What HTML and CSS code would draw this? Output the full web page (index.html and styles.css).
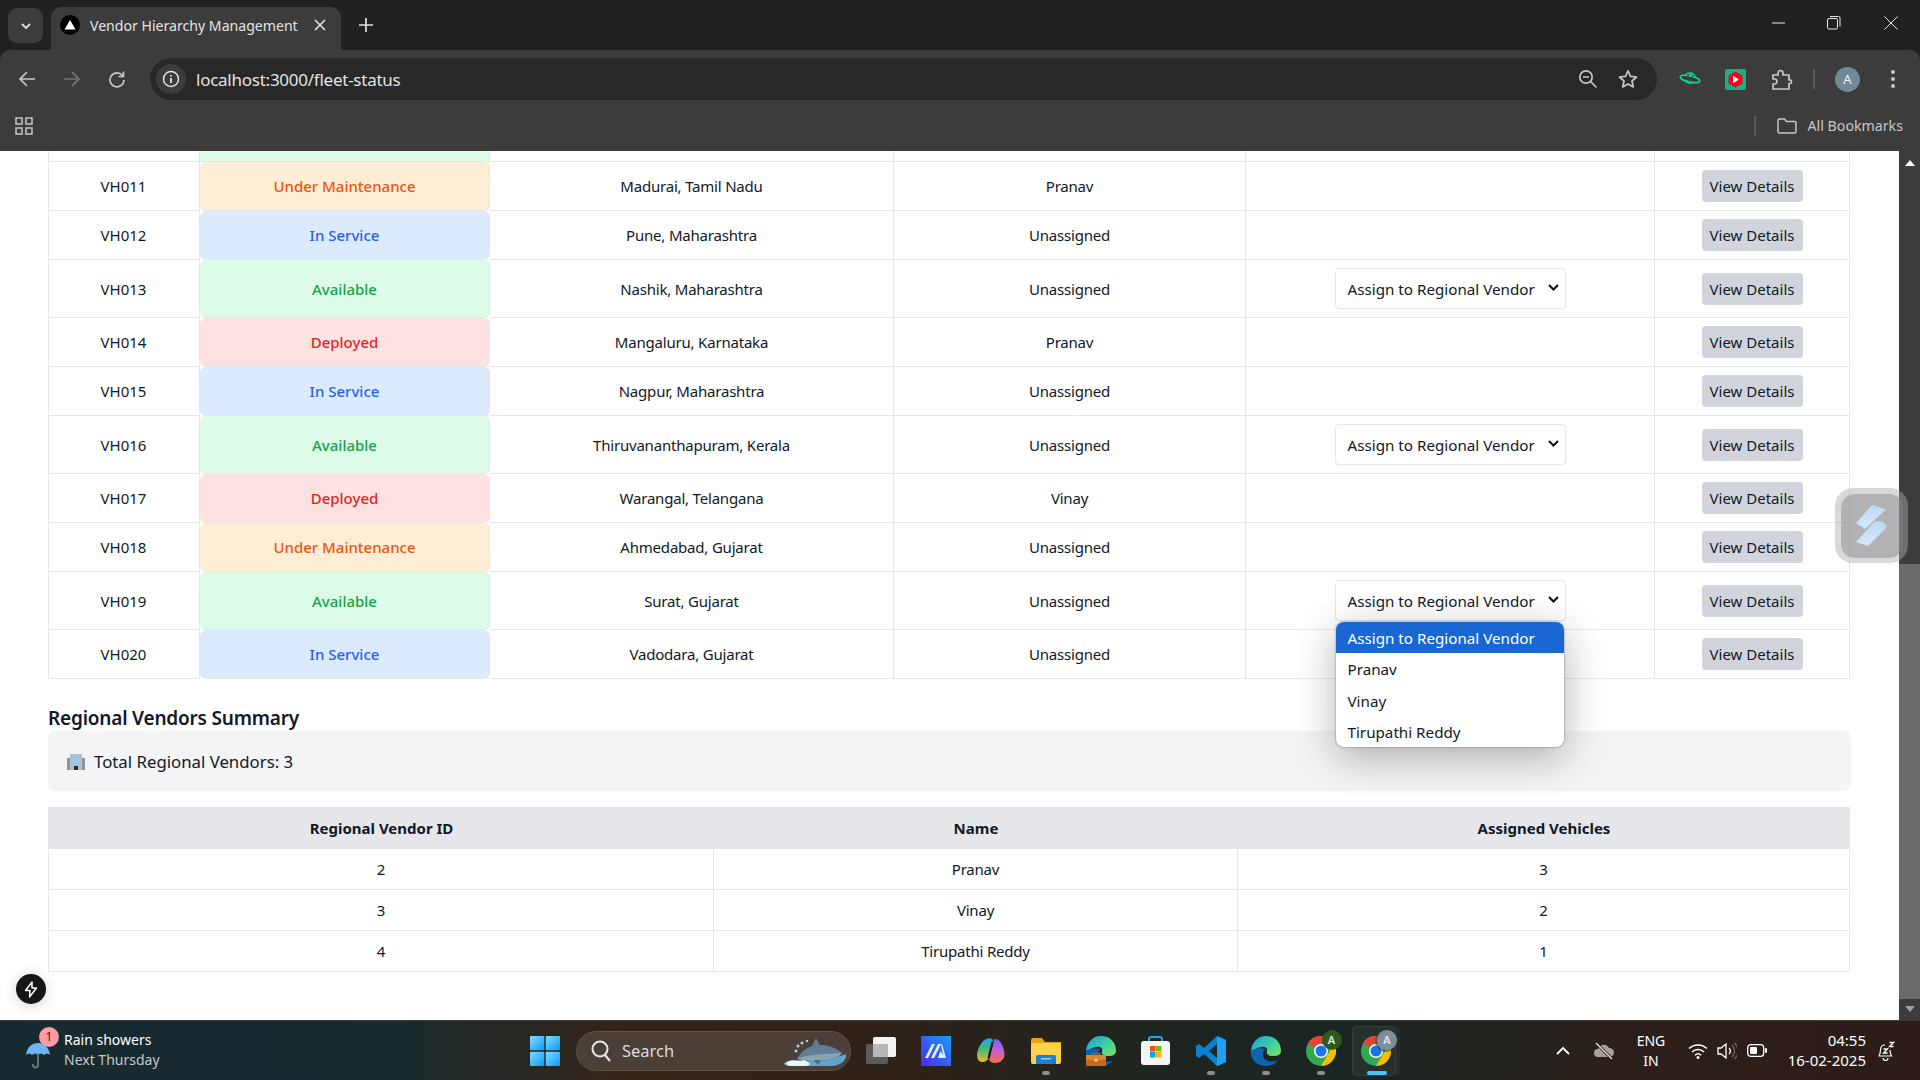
FILE: index.html
```html
<!DOCTYPE html>
<html lang="en">
<head>
<meta charset="utf-8">
<title>Vendor Hierarchy Management</title>
<link rel="stylesheet" href="styles.css">
</head>
<body>
<div class="screen">

  <header class="chrome">
    <div class="tabstrip">
      <div class="tab-search"><svg width="12" height="12" viewBox="0 0 12 12"><path d="M2 4l4 4 4-4" fill="none" stroke="#e3e3e3" stroke-width="1.8"/></svg></div>
      <div class="tab">
        <span class="favicon"><svg width="20" height="20" viewBox="0 0 20 20"><circle cx="10" cy="10" r="10" fill="#000"/><path d="M10 5l5.5 9.5h-11z" fill="#fff"/></svg></span>
        <span class="tab-title">Vendor Hierarchy Management</span>
        <svg class="tab-close" width="12" height="12" viewBox="0 0 12 12"><path d="M1 1l10 10M11 1L1 11" stroke="#e3e3e3" stroke-width="1.6"/></svg>
      </div>
      <svg class="new-tab" width="14" height="14" viewBox="0 0 14 14"><path d="M7 0v14M0 7h14" stroke="#e3e3e3" stroke-width="1.7"/></svg>
      <div class="win-controls">
        <svg width="14" height="14" viewBox="0 0 14 14"><path d="M0 7h13" stroke="#e8e8e8" stroke-width="1"/></svg>
        <svg width="14" height="14" viewBox="0 0 14 14"><rect x=".5" y="2.5" width="10" height="10.5" rx="1.5" fill="none" stroke="#e8e8e8"/><path d="M3 .5h8.5a1.500 1.500 0 0 1 1.500 1.500v8.500" fill="none" stroke="#e8e8e8"/></svg>
        <svg class="win-close" width="14" height="14" viewBox="0 0 14 14"><path d="M.5.500l13 13M13.500.500l-13 13" stroke="#e8e8e8" stroke-width="1"/></svg>
      </div>
    </div>
    <div class="toolbar">
      <div class="nav-icons">
        <svg width="18" height="18" viewBox="0 0 18 18"><path d="M17 9H2M9 2L2 9l7 7" fill="none" stroke="#c7c7c7" stroke-width="1.700"/></svg>
        <svg width="18" height="18" viewBox="0 0 18 18"><path d="M1 9h15M9 2l7 7-7 7" fill="none" stroke="#757575" stroke-width="1.700"/></svg>
        <svg width="18" height="18" viewBox="0 0 18 18"><path d="M14.500 5.500A7 7 0 1 0 16 10M15.500 1.500v5h-5" fill="none" stroke="#c7c7c7" stroke-width="1.700"/></svg>
      </div>
      <div class="omnibox">
        <span class="site-chip"><svg width="18" height="18" viewBox="0 0 18 18"><circle cx="9" cy="9" r="7.500" fill="none" stroke="#e3e3e3" stroke-width="1.500"/><path d="M9 8v5M9 5v1.600" stroke="#e3e3e3" stroke-width="1.800"/></svg></span>
        <span class="url">localhost:3000/fleet-status</span>
        <span class="omni-right">
          <svg width="20" height="20" viewBox="0 0 20 20"><circle cx="8" cy="8" r="6.200" fill="none" stroke="#c7c7c7" stroke-width="1.700"/><path d="M5 8h6M12.500 12.500l6 6" stroke="#c7c7c7" stroke-width="1.700"/></svg>
          <svg width="20" height="20" viewBox="0 0 20 20"><path d="M10 1.800l2.500 5.500 6 .7-4.500 4 1.300 6L10 15l-5.300 3 1.300-6-4.500-4 6-.7z" fill="none" stroke="#c7c7c7" stroke-width="1.700" stroke-linejoin="round"/></svg>
        </span>
      </div>
      <div class="ext-icons">
        <svg class="ext-planet" width="22" height="16" viewBox="0 0 22 16"><circle cx="11" cy="7" r="6" fill="#0fbf8f"/><ellipse cx="11" cy="8" rx="10" ry="3.200" fill="#3c3c3c" stroke="#14d6a0" stroke-width="1.600" transform="rotate(12 11 8)"/><path d="M6 8c3 2 7 3 10 2-2 3-8 2-10-2z" fill="#0fbf8f"/><circle cx="9" cy="4" r="1" fill="#2a4a40"/><circle cx="14" cy="5" r=".9" fill="#2a4a40"/></svg>
        <svg class="ext-yt" width="21" height="21" viewBox="0 0 21 21"><rect width="21" height="21" rx="2" fill="#10b38a"/><path d="M10.500 2.500l7 4v8l-7 4-7-4v-8z" fill="#f4051c"/><path d="M8 6.800l6 3.700-6 3.700z" fill="#fff"/></svg>
        <svg class="ext-puzzle" width="21" height="21" viewBox="0 0 21 21"><path d="M1 6h5V4a2.500 2.500 0 0 1 5 0v2h6v5h1.500a2 2 0 0 1 0 3.500H17V20H1v-5h1.500a2.500 2.500 0 0 0 0-5H1z" fill="none" stroke="#c7c7c7" stroke-width="1.700"/></svg>
        <span class="sep"></span>
        <span class="avatar">A</span>
        <svg class="kebab" width="6" height="20" viewBox="0 0 6 20"><circle cx="3" cy="3" r="2" fill="#c7c7c7"/><circle cx="3" cy="10" r="2" fill="#c7c7c7"/><circle cx="3" cy="17" r="2" fill="#c7c7c7"/></svg>
      </div>
    </div>
    <div class="bookmarks">
      <svg width="18" height="18" viewBox="0 0 18 18"><g fill="none" stroke="#c7c7c7" stroke-width="1.500"><rect x="1" y="1" width="6" height="6"/><rect x="11" y="1" width="6" height="6"/><rect x="1" y="11" width="6" height="6"/><rect x="11" y="11" width="6" height="6"/></g></svg>
      <span class="bm-sep"></span>
      <svg width="20" height="16" viewBox="0 0 20 16"><path d="M1 2.500a1.500 1.500 0 0 1 1.500-1.500h5l2 2.500h8a1.500 1.500 0 0 1 1.500 1.500v8.500a1.500 1.500 0 0 1-1.500 1.500h-15A1.500 1.500 0 0 1 1 13.500z" fill="none" stroke="#c7c7c7" stroke-width="1.500"/></svg>
      <span class="bm-label">All Bookmarks</span>
    </div>
  </header>

  <main class="viewport">
    <div class="page">
      <table class="fleet">
        <colgroup><col class="c1"><col class="c2"><col class="c3"><col class="c4"><col class="c5"><col class="c6"></colgroup>
        <tbody>
          <tr class="clipped"><td></td><td class="st-available"></td><td></td><td></td><td></td><td></td></tr>
          <tr><td class="vid">VH011</td><td class="status st-maint"><span>Under Maintenance</span></td><td>Madurai, Tamil Nadu</td><td>Pranav</td><td></td><td><button class="view">View Details</button></td></tr>
          <tr><td class="vid">VH012</td><td class="status st-service"><span>In Service</span></td><td>Pune, Maharashtra</td><td>Unassigned</td><td></td><td><button class="view">View Details</button></td></tr>
          <tr><td class="vid">VH013</td><td class="status st-available"><span>Available</span></td><td>Nashik, Maharashtra</td><td>Unassigned</td><td><div class="assign">Assign to Regional Vendor<svg width="11" height="7" viewBox="0 0 11 7"><path d="M1 1l4.500 4.500L10 1" fill="none" stroke="#111" stroke-width="2"/></svg></div></td><td><button class="view">View Details</button></td></tr>
          <tr><td class="vid">VH014</td><td class="status st-deployed"><span>Deployed</span></td><td>Mangaluru, Karnataka</td><td>Pranav</td><td></td><td><button class="view">View Details</button></td></tr>
          <tr><td class="vid">VH015</td><td class="status st-service"><span>In Service</span></td><td>Nagpur, Maharashtra</td><td>Unassigned</td><td></td><td><button class="view">View Details</button></td></tr>
          <tr><td class="vid">VH016</td><td class="status st-available"><span>Available</span></td><td>Thiruvananthapuram, Kerala</td><td>Unassigned</td><td><div class="assign">Assign to Regional Vendor<svg width="11" height="7" viewBox="0 0 11 7"><path d="M1 1l4.500 4.500L10 1" fill="none" stroke="#111" stroke-width="2"/></svg></div></td><td><button class="view">View Details</button></td></tr>
          <tr><td class="vid">VH017</td><td class="status st-deployed"><span>Deployed</span></td><td>Warangal, Telangana</td><td>Vinay</td><td></td><td><button class="view">View Details</button></td></tr>
          <tr><td class="vid">VH018</td><td class="status st-maint"><span>Under Maintenance</span></td><td>Ahmedabad, Gujarat</td><td>Unassigned</td><td></td><td><button class="view">View Details</button></td></tr>
          <tr><td class="vid">VH019</td><td class="status st-available"><span>Available</span></td><td>Surat, Gujarat</td><td>Unassigned</td><td class="assign-cell"><div class="assign">Assign to Regional Vendor<svg width="11" height="7" viewBox="0 0 11 7"><path d="M1 1l4.500 4.500L10 1" fill="none" stroke="#111" stroke-width="2"/></svg>
            <div class="popup"><div class="opt selected">Assign to Regional Vendor</div><div class="opt">Pranav</div><div class="opt">Vinay</div><div class="opt">Tirupathi Reddy</div></div>
          </div></td><td><button class="view">View Details</button></td></tr>
          <tr><td class="vid">VH020</td><td class="status st-service"><span>In Service</span></td><td>Vadodara, Gujarat</td><td>Unassigned</td><td></td><td><button class="view">View Details</button></td></tr>
        </tbody>
      </table>

      <h2 class="summary-title">Regional Vendors Summary</h2>
      <div class="summary-box"><span class="bldg"><svg width="20" height="20" viewBox="0 0 20 20"><path d="M4 3h12v16H4z" fill="#b6bcc4"/><path d="M1 7h3v12H1zM16 7h3v12h-3z" fill="#8e959e"/><path d="M6 4h8v10H6z" fill="#8ecbf5"/><path d="M8.500 4v10M11.500 4v10M6 7h8M6 10h8" stroke="#b6bcc4" stroke-width=".7"/><path d="M8 15h4v4H8z" fill="#2b2b2b"/></svg></span>Total Regional Vendors: 3</div>

      <table class="regional">
        <colgroup><col class="r1"><col class="r2"><col class="r3"></colgroup>
        <thead><tr><th>Regional Vendor ID</th><th>Name</th><th>Assigned Vehicles</th></tr></thead>
        <tbody>
          <tr><td>2</td><td>Pranav</td><td>3</td></tr>
          <tr><td>3</td><td>Vinay</td><td>2</td></tr>
          <tr><td>4</td><td>Tirupathi Reddy</td><td>1</td></tr>
        </tbody>
      </table>
    </div>

    <div class="dev-badge"><svg width="14" height="17" viewBox="0 0 14 17"><path d="M8 1L1.500 9.500H6L5.500 16 12.500 7H8z" fill="none" stroke="#fff" stroke-width="1.500" stroke-linejoin="round"/></svg></div>

    <div class="scrollbar">
      <svg class="sb-up" width="10" height="6" viewBox="0 0 10 6"><path d="M5 0l5 6H0z" fill="#fff"/></svg>
      <div class="sb-thumb"></div>
      <svg class="sb-down" width="10" height="6" viewBox="0 0 10 6"><path d="M5 6l5-6H0z" fill="#a0a0a0"/></svg>
    </div>

    <div class="float-widget"><div class="float-inner"><svg width="31" height="41" viewBox="0 0 31 41"><defs><linearGradient id="fw" x1="0" y1="0" x2="0" y2="1"><stop offset="0" stop-color="#bcd9f5"/><stop offset="1" stop-color="#d6e8fa"/></linearGradient></defs><path d="M16 0l14 4.500L9 24 0 18z" fill="url(#fw)"/><path d="M18 17c6-3 13 1 12 6L12 41 0 37z" fill="url(#fw)"/></svg></div></div>
  </main>

  <footer class="taskbar">
    <div class="weather">
      <span class="weather-icon">
        <svg width="24" height="32" viewBox="0 0 24 32"><path d="M0 18C1 10 6 6 12 6s11 4 12 12c-2-2-4-2-6 0-2-2-4-2-6 0-2-2-4-2-6 0-2-2-4-2-6 0z" fill="#6cb6f5"/><path d="M12 16v12a2.500 2.500 0 0 1-5 0v-1" fill="none" stroke="#777" stroke-width="1.800"/></svg>
        <span class="badge">1</span>
      </span>
      <div class="weather-text"><div class="w1">Rain showers</div><div class="w2">Next Thursday</div></div>
    </div>
    <div class="task-center">
      <svg class="t-win" width="30" height="30" viewBox="0 0 30 30"><defs><linearGradient id="w" x1="0" y1="0" x2="1" y2="1"><stop offset="0" stop-color="#7fdcfb"/><stop offset="1" stop-color="#0e9cf5"/></linearGradient></defs><rect width="14.300" height="14.300" rx="1" fill="url(#w)"/><rect x="15.700" width="14.300" height="14.300" rx="1" fill="url(#w)"/><rect y="15.700" width="14.300" height="14.300" rx="1" fill="url(#w)"/><rect x="15.700" y="15.700" width="14.300" height="14.300" rx="1" fill="url(#w)"/></svg>
      <div class="search">
        <svg width="22" height="24" viewBox="0 0 22 24"><circle cx="10" cy="10" r="7.500" fill="none" stroke="#e6e6e6" stroke-width="2"/><path d="M15 16l5 6" stroke="#e6e6e6" stroke-width="2.200"/></svg>
        <span>Search</span>
        <svg class="whale" width="64" height="28" viewBox="0 0 64 28"><path d="M0 25C8 20 16 25 26 23c14 2 24-3 36-7 1 6-5 12-16 12H6C2 28 0 27 0 25z" fill="#5aa7d0"/><path d="M13 21C17 12 27 6 38 7c8 0 15 4 20 8-2 3-5 5-10 6-12 3-24 2-35 0z" fill="#5f7d96"/><path d="M13 21c10-5 30-5 45-6-4 4-8 6-14 7-10 2-21 1-31-1z" fill="#87a3b6"/><path d="M28 8l4-8 4 8z" fill="#5f7d96"/><path d="M30 22l4 5 3-5z" fill="#4d6a82"/><path d="M2 25c6-5 12-1 18-3 6 2 8 5 2 6H8c-4 0-6-1-6-3z" fill="#e8f6ff"/><g fill="#a8d8ef"><circle cx="14" cy="8" r="1.500"/><circle cx="18" cy="5" r="1.500"/><circle cx="12" cy="13" r="1.500"/><circle cx="23" cy="3" r="1.200"/></g></svg>
      </div>
      <div class="apps">
        <span class="app"><svg width="30" height="27" viewBox="0 0 30 27"><rect y="7" width="22" height="20" rx="2" fill="#5c5c5c"/><rect x="7" width="23" height="20" rx="2" fill="#f4f4f4"/><rect x="7" y="7" width="15" height="13" fill="#b8b8b8"/></svg></span>
        <span class="app"><svg width="30" height="30" viewBox="0 0 30 30"><defs><linearGradient id="ai" x1="1" y="0" x2="0" y2="1"><stop offset="0" stop-color="#169ff0"/><stop offset="1" stop-color="#4f27f2"/></linearGradient></defs><rect width="30" height="30" fill="url(#ai)"/><path d="M4 22L11 8h3L7 22zM10 22L17 8h3l-7 14zM19.500 15l4.500 7h-7z" fill="#e6ebff"/><path d="M20 8h1l4 14h-2.500z" fill="#e6ebff"/></svg></span>
        <span class="app"><svg width="28" height="25" viewBox="0 0 28 25"><defs><linearGradient id="co1" x1="0" y1="0" x2="0" y2="1"><stop offset="0" stop-color="#1f9df0"/><stop offset=".5" stop-color="#47bd72"/><stop offset="1" stop-color="#f7b52e"/></linearGradient><linearGradient id="co2" x1="0" y1="0" x2="0" y2="1"><stop offset="0" stop-color="#6a6bf0"/><stop offset=".5" stop-color="#c95fcf"/><stop offset="1" stop-color="#f5703f"/></linearGradient></defs><path d="M9 1c3-1.500 6-1 7 1l-4 16c-1 4-3 6-7 6C1 24 0 20 0 16 1 9 5 3 9 1z" fill="url(#co1)"/><path d="M18 1c4 0 6 3 8 8 2 6 2 10 0 12-2 3-5 4-8 4-3 0-5-1-6-3l4-15c0-3 1-6 2-6z" fill="url(#co2)"/><path d="M15.500 4l-4 16" stroke="#241a14" stroke-width="2"/></svg></span>
        <span class="app running"><svg width="30" height="26" viewBox="0 0 30 26"><path d="M0 2a2 2 0 0 1 2-2h9l3 4h16v8H0z" fill="#e4a414"/><rect y="5" width="30" height="21" rx="2" fill="#fcd24a"/><path d="M5 19a2 2 0 0 1 2-2h16a2 2 0 0 1 2 2v7H5z" fill="#1681d6"/><rect x="10" y="20" width="10" height="1.500" fill="#9fd0f5"/></svg></span>
        <span class="app"><svg width="30" height="30" viewBox="0 0 30 30"><defs><linearGradient id="ed" x1="0" y1="0" x2="1" y2=".8"><stop offset="0" stop-color="#1a9be0"/><stop offset=".6" stop-color="#3fd0a0"/><stop offset="1" stop-color="#6be06a"/></linearGradient></defs><path d="M15 0c9 0 15 6 15 15 0 4-4 5-7 5-5 0-8-1-7-5 1-3-2-5-6-4C4 12 1 16 0 15 1 6 7 0 15 0z" fill="url(#ed)"/><path d="M0 15c-1 9 6 15 15 15 5 0 9-2 12-6-6 3-15 2-15-6 0-3 2-4 3-5-6-2-14 0-15 2z" fill="#0f5fae"/><path d="M6 20v-2.500h8V20" fill="none" stroke="#a85a18" stroke-width="1.500"/><rect y="19" width="20" height="11" rx="1" fill="#c2691f"/><rect y="19" width="20" height="5" fill="#d98a2d"/><rect x="8.500" y="23" width="3" height="2.500" fill="#f7d27a"/></svg></span>
        <span class="app"><svg width="29" height="29" viewBox="0 0 29 29"><path d="M8 6V3a2 2 0 0 1 2-2h9a2 2 0 0 1 2 2v3" fill="none" stroke="#25a6e8" stroke-width="2"/><rect y="5" width="29" height="24" rx="3" fill="#f5f5f5"/><rect x="9" y="10" width="5.500" height="5.500" fill="#f25022"/><rect x="15" y="10" width="5.500" height="5.500" fill="#7fba00"/><rect x="9" y="16" width="5.500" height="5.500" fill="#00a4ef"/><rect x="15" y="16" width="5.500" height="5.500" fill="#ffb900"/></svg></span>
        <span class="app running"><svg width="30" height="30" viewBox="0 0 30 30"><path d="M21 0l9 4v22l-9 4L8 18l-5 4-3-2V10l3-2 5 4z" fill="#0b7fd0"/><path d="M21 8l-8 7 8 7z" fill="#1f2a24"/><path d="M21 0l9 4v22l-9 4z" fill="#1ea1f1"/></svg></span>
        <span class="app running"><svg width="30" height="30" viewBox="0 0 30 30"><defs><linearGradient id="ed2" x1="0" y1="0" x2="1" y2=".8"><stop offset="0" stop-color="#1a9be0"/><stop offset=".6" stop-color="#3fd0a0"/><stop offset="1" stop-color="#6be06a"/></linearGradient></defs><path d="M15 0c9 0 15 6 15 15 0 4-4 5-7 5-5 0-8-1-7-5 1-3-2-5-6-4C4 12 1 16 0 15 1 6 7 0 15 0z" fill="url(#ed2)"/><path d="M0 15c-1 9 6 15 15 15 5 0 9-2 12-6-6 3-15 2-15-6 0-3 2-4 3-5-6-2-14 0-15 2z" fill="#0f63b3"/></svg></span>
        <span class="app running"><span class="chrome-logo"><svg width="30" height="30" viewBox="0 0 30 30"><circle cx="15" cy="15" r="15" fill="#34a853"/><path d="M15 0a15 15 0 0 1 13 7.500H15a7.500 7.500 0 0 0-7 4.500L2 7A15 15 0 0 1 15 0z" fill="#ea4335"/><path d="M28 7.500A15 15 0 0 1 15 30l6.500-11a7.500 7.500 0 0 0 0-11.500z" fill="#fbbc04"/><circle cx="15" cy="15" r="7" fill="#fff"/><circle cx="15" cy="15" r="5.500" fill="#1a73e8"/></svg><span class="profile green">A</span></span></span>
        <span class="app active"><span class="chrome-logo"><svg width="30" height="30" viewBox="0 0 30 30"><circle cx="15" cy="15" r="15" fill="#34a853"/><path d="M15 0a15 15 0 0 1 13 7.500H15a7.500 7.500 0 0 0-7 4.500L2 7A15 15 0 0 1 15 0z" fill="#ea4335"/><path d="M28 7.500A15 15 0 0 1 15 30l6.500-11a7.500 7.500 0 0 0 0-11.500z" fill="#fbbc04"/><circle cx="15" cy="15" r="7" fill="#fff"/><circle cx="15" cy="15" r="5.500" fill="#1a73e8"/></svg><span class="profile grey">A</span></span></span>
      </div>
    </div>
    <div class="tray">
      <svg class="tr-chev" width="14" height="9" viewBox="0 0 14 9"><path d="M1 8l6-6 6 6" fill="none" stroke="#fff" stroke-width="1.800"/></svg>
      <svg class="tr-cloud" width="22" height="18" viewBox="0 0 22 18"><path d="M5 15a4 4 0 0 1 0-8 6 6 0 0 1 11-1 4.500 4.500 0 0 1 1 9z" fill="#a6a09c"/><path d="M3 1l16 16" stroke="#2c1d18" stroke-width="3"/><path d="M3 1l16 16" stroke="#e8e8e8" stroke-width="1.300"/></svg>
      <div class="lang"><div>ENG</div><div>IN</div></div>
      <svg class="tr-wifi" width="20" height="16" viewBox="0 0 20 16"><path d="M1 5.500a13 13 0 0 1 18 0M4 9a8.500 8.500 0 0 1 12 0M7 12.200a4 4 0 0 1 6 0" fill="none" stroke="#fff" stroke-width="1.500"/><circle cx="10" cy="14.500" r="1.500" fill="#fff"/></svg>
      <svg class="tr-vol" width="20" height="18" viewBox="0 0 20 18"><path d="M1 6h3l5-4v14l-5-4H1z" fill="none" stroke="#fff" stroke-width="1.300"/><path d="M12 6a4 4 0 0 1 0 6" fill="none" stroke="#fff" stroke-width="1.300"/><path d="M15 3a8.500 8.500 0 0 1 0 12M17.500 1a11 11 0 0 1 0 16" fill="none" stroke="#77706c" stroke-width="1.200"/></svg>
      <svg class="tr-bat" width="20" height="13" viewBox="0 0 20 13"><rect x=".7" y=".7" width="16" height="11.600" rx="3" fill="none" stroke="#fff" stroke-width="1.300"/><rect x="3" y="3" width="7" height="7" rx="1" fill="#fff"/><rect x="18" y="4" width="2" height="5" rx="1" fill="#fff"/></svg>
      <div class="clock"><div>04:55</div><div>16-02-2025</div></div>
      <svg class="tr-bell" width="18" height="20" viewBox="0 0 18 20"><path d="M2 15c1-2 1.500-3 1.500-6S5 4 8 4M13 9c0 3 .5 4 1.500 6H1.500M6 17a2.500 2.500 0 0 0 5 0" fill="none" stroke="#fff" stroke-width="1.200"/><path d="M6.500 8h4l-4 4h4M12.500 1.500h4l-4 4h4" fill="none" stroke="#fff" stroke-width="1.300"/></svg>
    </div>
  </footer>
</div>
</body>
</html>
```

FILE: styles.css
```css
* { box-sizing: border-box; }
html, body { margin: 0; height: 100%; overflow: hidden; }
body { font-family: "Noto Sans", "Open Sans", sans-serif; color: #111827; background: #fff; }

.screen { width: 1920px; height: 1080px; display: flex; flex-direction: column; }

/* browser chrome */
.chrome { height: 151px; flex: none; background: #202221; display: flex; flex-direction: column; }
.tabstrip { height: 50px; display: flex; align-items: flex-start; padding: 7px 0 0 8px; }
.tab-search { width: 35px; height: 35px; margin-top: 1px; border-radius: 9px; background: #3c3c3c; display: flex; align-items: center; justify-content: center; }
.tab { width: 290px; height: 43px; margin-left: 8px; background: #3c3c3c; border-radius: 10px 10px 0 0; display: flex; align-items: center; padding: 0 15px 7px 9px; color: #e3e3e3; font-size: 14.100px; }
.favicon { display: flex; width: 20px; height: 20px; }
.tab-title { margin-left: 10px; flex: 1; white-space: nowrap; }
.tab-close { flex: none; }
.new-tab { margin: 11px 0 0 18px; }
.win-controls { margin-left: auto; margin-top: 9px; display: flex; gap: 41px; padding-right: 22px; }
.win-close { margin-left: 2px; }
.toolbar { height: 58px; background: #3c3c3c; border-radius: 10px 10px 0 0; display: flex; align-items: center; padding: 0 0 0 18px; }
.nav-icons { display: flex; gap: 27px; align-items: center; }
.omnibox { margin-left: 24px; width: 1507px; height: 42px; background: #282828; border-radius: 21px; display: flex; align-items: center; padding: 0 19px 0 6px; }
.site-chip { width: 30px; height: 30px; border-radius: 50%; background: #3c3c3c; display: flex; align-items: center; justify-content: center; flex: none; }
.url { margin-left: 10px; color: #e3e3e3; font-size: 17px; letter-spacing: -.25px; white-space: nowrap; }
.omni-right { margin-left: auto; display: flex; gap: 20px; align-items: center; }
.ext-icons { display: flex; align-items: center; margin-left: 22px; }
.ext-yt { margin-left: 24px; }
.ext-puzzle { margin-left: 26px; }
.sep { width: 2px; height: 20px; background: #5a5a5a; margin-left: 20px; }
.avatar { margin-left: 20px; width: 25px; height: 25px; border-radius: 50%; background: #708a9a; color: #f2f2f2; font-size: 13px; display: flex; align-items: center; justify-content: center; }
.kebab { margin-left: 30px; }
.bookmarks { height: 43px; background: #3c3c3c; display: flex; align-items: center; padding: 0 17px 8px 15px; color: #c7c7c7; font-size: 14.200px; }
.bm-sep { margin-left: auto; width: 2px; height: 20px; background: #5a5a5a; margin-right: 21px; }
.bm-label { margin-left: 11px; white-space: nowrap; }

/* page */
.viewport { flex: 1; position: relative; overflow: hidden; background: #fff; }
.page { padding: 0 69px 0 48px; }

.fleet, .regional { table-layout: fixed; border-collapse: separate; border-spacing: 0; border-left: 1px solid #e5e7eb; font-size: 15px; letter-spacing: -.2px; }
.fleet { width: 1802px; }
.regional { width: 1802px; }
.fleet td, .regional td, .regional th { border-right: 1px solid #e5e7eb; border-bottom: 1px solid #e5e7eb; padding: 8px; text-align: center; white-space: nowrap; }
.c1 { width: 151px; } .c2 { width: 290px; } .c3 { width: 404px; } .c4 { width: 352px; } .c5 { width: 409px; } .c6 { width: 195px; }
.fleet tr { height: 49px; }
.fleet tr.clipped { height: 11px; }
.fleet tr.clipped td { padding: 0; height: 11px; }
.fleet td.vid { letter-spacing: 0; padding-right: 9px; }
.fleet td.status { font-weight: 500; letter-spacing: 0; border-radius: 6px; }
.st-available { background: #dcfce7; color: #16a34a; }
.st-maint { background: #ffedd5; color: #ea580c; }
.st-service { background: #dbeafe; color: #2563eb; }
.st-deployed { background: #fee2e2; color: #dc2626; }
.view { background: #d1d5db; border: 0; border-radius: 4px; height: 32px; width: 101px; padding: 0; font: inherit; font-size: 15px; letter-spacing: 0; color: #111827; vertical-align: middle; }
.assign { position: relative; display: inline-flex; align-items: center; justify-content: space-between; width: 231px; height: 41px; padding: 0 6px 0 12px; border: 1px solid #e5e7eb; border-radius: 4px; background: #fff; text-align: left; font-size: 15.200px; letter-spacing: 0; vertical-align: middle; box-shadow: 0 1px 2px rgba(0,0,0,.03); }
.assign svg { margin-bottom: 3px; }
.popup { position: absolute; left: 0; top: 41px; width: 228px; z-index: 5; background: #fff; border-radius: 8px; overflow: hidden; box-shadow: 0 10px 40px rgba(0,0,0,.3), 0 0 2px rgba(0,0,0,.5); }
.opt { height: 31.250px; padding: 1px 12px 0; display: flex; align-items: center; }
.opt.selected { background: #1967d2; color: #fff; }

.summary-title { margin: 21px 0 0; height: 31px; font-size: 19px; letter-spacing: -.2px; line-height: 36px; font-weight: 600; color: #111827; }
.summary-box { height: 60px; background: #f3f4f6; border-radius: 8px; display: flex; align-items: center; padding-left: 18px; font-size: 16.800px; width: 1803px; }
.bldg { display: flex; margin-right: 8px; }
.regional { margin-top: 16px; }
.r1 { width: 665px; } .r2 { width: 524px; } .r3 { width: 612px; }
.regional th { background: #e5e7eb; border-right: 0; border-bottom: 0; height: 42px; font-size: 15px; letter-spacing: 0; font-weight: 700; padding: 0; }
.regional td { height: 41px; padding: 0; }

.dev-badge { position: absolute; left: 16px; top: 823px; width: 30px; height: 30px; border-radius: 50%; background: #161616; display: flex; align-items: center; justify-content: center; box-shadow: 0 2px 14px rgba(0,0,0,.18); }

.scrollbar { position: absolute; right: 0; top: 0; bottom: 0; width: 21px; background: #3c3c3c; display: flex; flex-direction: column; align-items: center; }
.sb-up { margin-top: 9px; flex: none; }
.sb-thumb { margin-top: 398px; width: 100%; height: 435px; background: #6b6b6b; flex: none; }
.sb-down { margin-top: 7px; flex: none; }

.float-widget { position: absolute; left: 1835px; top: 337px; width: 73px; height: 75px; border-radius: 18px; background: rgba(170,170,176,.45); display: flex; align-items: center; justify-content: center; }
.float-inner { width: 62px; height: 64px; border-radius: 14px; background: rgba(130,130,136,.45); display: flex; align-items: center; justify-content: center; }

/* taskbar */
.taskbar { height: 60px; flex: none; position: relative; display: flex; align-items: center; color: #fff; border-top: 1px solid #3d3d3d; background: linear-gradient(90deg, #172a31 0%, #182a2e 20%, #33241a 32%, #2f2118 46%, #1f2520 60%, #1a2622 70%, #2c1f1a 85%, #2d1c18 100%); }
.weather { display: flex; align-items: center; padding-left: 26px; width: 500px; }
.weather-icon { position: relative; width: 24px; height: 32px; display: flex; margin-top: 4px; }
.badge { position: absolute; left: 13px; top: -10px; width: 20px; height: 20px; border-radius: 50%; background: #ff99a4; color: #2a1a1a; font-size: 12px; display: flex; align-items: center; justify-content: center; }
.weather-text { margin: -2px 0 0 14px; font-size: 14px; line-height: 20px; white-space: nowrap; }
.w2 { color: #c5c9c9; }
.task-center { position: absolute; left: 530px; top: 0; bottom: 0; display: flex; align-items: center; }
.search { margin-left: 16px; width: 275px; height: 40px; border-radius: 20px; background: #4b3f38; border: 1px solid #5c5048; display: flex; align-items: center; padding-left: 13px; font-size: 16.500px; color: #dcdcdc; position: relative; }
.search span { margin-left: 10px; }
.whale { position: absolute; right: 2px; top: 6px; }
.apps { display: flex; margin-left: 2px; }
.app { width: 55px; height: 50px; display: flex; align-items: center; justify-content: center; position: relative; }
.app.running::after { content: ""; position: absolute; left: 50%; bottom: 1px; width: 8px; height: 4px; margin-left: -4px; border-radius: 2px; background: #8e8e8e; }
.app.active { background: rgba(255,255,255,.05); border: 1px solid rgba(255,255,255,.07); border-radius: 5px; width: 44px; margin-left: 4px; padding-left: 4px; box-shadow: 5px 0 0 -1px rgba(255,255,255,.04); }
.app.active::after { content: ""; position: absolute; left: 14px; bottom: 0; width: 20px; height: 4px; border-radius: 2px; background: #4fc3f7; }
.chrome-logo { position: relative; display: flex; }
.profile { position: absolute; right: -6px; top: -6px; width: 20px; height: 20px; border-radius: 50%; font-size: 11px; font-weight: 600; display: flex; align-items: center; justify-content: center; color: #dfe6df; }
.profile.green { background: #2e5a1e; }
.profile.grey { background: #7e8f9c; box-shadow: -1px 1px 0 1px rgba(60,70,80,.6); }
.tray { position: absolute; left: 0; top: 0; bottom: 0; right: 0; pointer-events: none; display: flex; align-items: center; padding-left: 1556px; }
.tr-cloud { margin-left: 23px; }
.lang { margin-left: 16px; width: 40px; text-align: center; font-size: 14px; line-height: 20px; }
.tr-wifi { margin-left: 17px; }
.tr-vol { margin-left: 9px; }
.tr-bat { margin-left: 10px; }
.clock { margin: -2px 0 0 1px; width: 98px; text-align: right; font-size: 15px; line-height: 20px; white-space: nowrap; }
.tr-bell { margin-left: 11px; }
```
